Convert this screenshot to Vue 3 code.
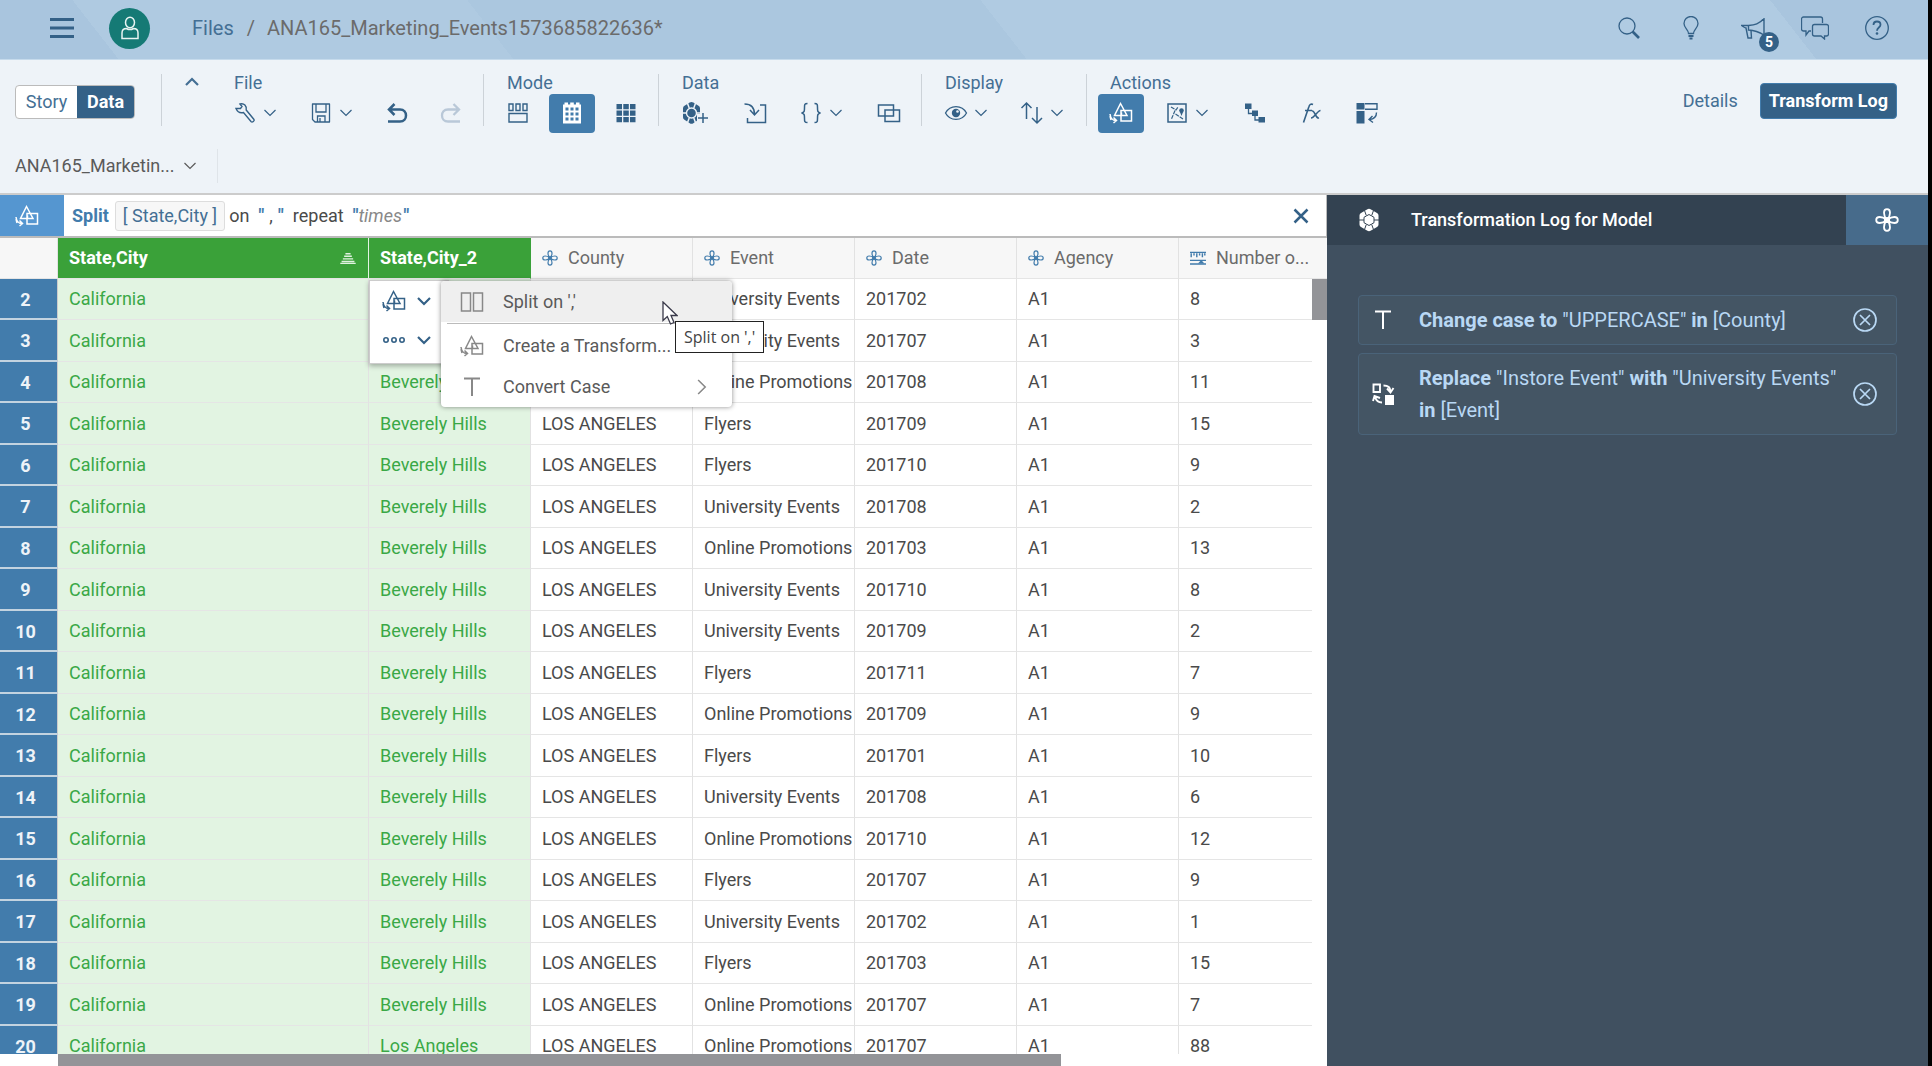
<script setup>
import { ref } from 'vue'

const view = ref('data')

const toolGroups = [
  {
    label: 'File',
    wide: false,
    tools: [
      { icon: 'wrench', name: 'Settings', menu: true },
      { icon: 'save', name: 'Save', menu: true },
      { icon: 'undo', name: 'Undo' },
      { icon: 'redo', name: 'Redo', disabled: true },
    ],
  },
  {
    label: 'Mode',
    wide: false,
    tools: [
      { icon: 'cards', name: 'Card view' },
      { icon: 'sheet', name: 'Grid view', active: true },
      { icon: 'tiles', name: 'Dimension view' },
    ],
  },
  {
    label: 'Data',
    wide: true,
    tools: [
      { icon: 'cluster-add', name: 'Add model', large: true },
      { icon: 'import', name: 'Import' },
      { icon: 'braces', name: 'Expression', menu: true },
      { icon: 'combine', name: 'Combine data' },
    ],
  },
  {
    label: 'Display',
    wide: false,
    tools: [
      { icon: 'eye', name: 'Show or hide', menu: true },
      { icon: 'sort', name: 'Sort', menu: true },
    ],
  },
  {
    label: 'Actions',
    wide: true,
    tools: [
      { icon: 'transform', name: 'Create transform', active: true },
      { icon: 'geo', name: 'Geo enrichment', menu: true },
      { icon: 'hierarchy', name: 'Hierarchy' },
      { icon: 'fx', name: 'Formula' },
      { icon: 'pivot', name: 'Pivot' },
    ],
  },
]

const columns = ['County', 'Event', 'Date', 'Agency']

const rows = [
  ['University Events', '201702', 8],
  ['University Events', '201707', 3],
  ['Online Promotions', '201708', 11],
  ['Flyers', '201709', 15],
  ['Flyers', '201710', 9],
  ['University Events', '201708', 2],
  ['Online Promotions', '201703', 13],
  ['University Events', '201710', 8],
  ['University Events', '201709', 2],
  ['Flyers', '201711', 7],
  ['Online Promotions', '201709', 9],
  ['Flyers', '201701', 10],
  ['University Events', '201708', 6],
  ['Online Promotions', '201710', 12],
  ['Flyers', '201707', 9],
  ['University Events', '201702', 1],
  ['Flyers', '201703', 15],
  ['Online Promotions', '201707', 7],
  ['Online Promotions', '201707', 88],
].map(([event, date, count], i, all) => ({
  id: i + 2,
  city: i === all.length - 1 ? 'Los Angeles' : 'Beverely Hills',
  event,
  date,
  count,
}))
</script>

<template>
  <div class="app">
    <svg class="sprite" aria-hidden="true">
      <defs>
        <symbol id="i-chevron" viewBox="0 0 14 14"><path d="M1.5 4 7 9.5 12.5 4" fill="none" stroke="currentColor" stroke-width="1.2" /></symbol>
        <symbol id="i-chevron-bold" viewBox="0 0 14 14"><path d="M1 4 7 10 13 4" fill="none" stroke="currentColor" stroke-width="2.2" /></symbol>
        <symbol id="i-menu" viewBox="0 0 24 24"><path d="M0 3.500H24M0 12H24M0 20.500H24" stroke="currentColor" stroke-width="3" /></symbol>
        <symbol id="i-user" viewBox="0 0 24 24"><g fill="none" stroke="currentColor" stroke-width="1.500"><ellipse cx="12" cy="6.500" rx="4.500" ry="5.300" /><path d="M4 22.500v-5.500c0-3 2-4.500 4.500-4.500 2 1.200 5 1.200 7 0 2.500 0 4.500 1.500 4.500 4.500v5.500z" /></g></symbol>
        <symbol id="i-search" viewBox="0 0 24 24"><circle cx="10" cy="10" r="8" fill="none" stroke="currentColor" stroke-width="1.300" /><path d="m15.500 15.500 6.500 6.500" stroke="currentColor" stroke-width="2.600" /></symbol>
        <symbol id="i-bulb" viewBox="0 0 24 24"><g fill="none" stroke="currentColor" stroke-width="1.300"><path d="M9.500 17.500c0-4-4.500-5.500-4.500-10a7 7 0 0 1 14 0c0 4.500-4.500 6-4.500 10z" /><path d="M9.500 20h5M10.500 22.500h3" stroke-width="2" /></g></symbol>
        <symbol id="i-megaphone" viewBox="0 0 24 24"><g fill="none" stroke="currentColor" stroke-width="1.400"><path d="M23 2v17M23 2.500C18 8 14 9 7.500 9.500v4.500c6.500.5 10.500 2 15.500 5M7.500 9.500H.5c1.500 1 3 2.500 4.500 2.500L7 22h3.500l-.5-7.500" /></g></symbol>
        <symbol id="i-chat" viewBox="0 0 28 24"><g fill="none" stroke="currentColor" stroke-width="1.300"><path d="M10 15H8l-3 4v-4H2.500a2 2 0 0 1-2-2V3a2 2 0 0 1 2-2h17a2 2 0 0 1 2 2v4" /><path d="M13.500 8.500h12a2 2 0 0 1 2 2v7.500a2 2 0 0 1-2 2h-2V23l-3.500-3h-6.500a2 2 0 0 1-2-2v-7.500a2 2 0 0 1 2-2z" /></g></symbol>
        <symbol id="i-help" viewBox="0 0 24 24"><circle cx="12" cy="12" r="11.300" fill="none" stroke="currentColor" stroke-width="1.300" /><path d="M8.500 9c0-2 1.500-3.500 3.500-3.500s3.500 1.300 3.500 3.200c0 2.800-3.500 2.800-3.500 6" fill="none" stroke="currentColor" stroke-width="1.800" /><circle cx="12" cy="17.500" r="1.300" fill="currentColor" /></symbol>

        <symbol id="i-wrench" viewBox="0 0 24 24"><path d="M3 7.500h4.500l1.500-2L7 3c4-1.200 7 2 6.200 6l7.800 9.500c.8 1.200-1.600 3.300-2.800 2.300L10.500 11.500c-3 .8-6-.5-7.500-4z" fill="none" stroke="currentColor" stroke-width="1.400" /></symbol>
        <symbol id="i-save" viewBox="0 0 24 24"><g fill="none" stroke="currentColor" stroke-width="1.300"><path d="M3.500 3h17v18H6l-2.500-2.500z" stroke-linejoin="round" /><path d="M7 3v8h10V3M8.500 21v-6H16v6M11 17v4" /></g></symbol>
        <symbol id="i-undo" viewBox="0 0 24 24"><path d="M9.500 3 4 8.500l5.500 5.500M4 8.500h11c4 0 6 3 6 6s-2 6-6 6H3" fill="none" stroke="currentColor" stroke-width="2.500" /></symbol>
        <symbol id="i-redo" viewBox="0 0 24 24"><path d="M14.500 3 20 8.500 14.500 14M20 8.500H9c-4 0-6 3-6 6s2 6 6 6h12" fill="none" stroke="currentColor" stroke-width="2.300" /></symbol>
        <symbol id="i-cards" viewBox="0 0 24 24"><path d="M3 3h4v6.500H3zM10 3h4v6.500h-4zM17 3h4v6.500h-4zM3 12.500h18V21H3z" fill="none" stroke="currentColor" stroke-width="1.400" /></symbol>
        <symbol id="i-sheet" viewBox="0 0 24 24"><path d="M4.500 1.500H8v2h2.200v-2h3.600v2H16v-2h3.500v2H21V22.500H3V3.500h1.500z" fill="currentColor" /><path d="M5.500 8h3M10.500 8h3M15.500 8h3M5.500 13h3M10.500 13h3M15.500 13h3M5.500 18h3M10.500 18h3M15.500 18h3" stroke="#427cac" stroke-width="3" /></symbol>
        <symbol id="i-tiles" viewBox="0 0 24 24"><path d="M2.500 3h5.500v5.300H2.500zM9.300 3h5.500v5.300H9.300zM16 3h5.500v5.300H16zM2.500 9.500h5.500v5.300H2.500zM9.300 9.500h5.500v5.300H9.300zM16 9.500h5.500v5.300H16zM2.500 16h5.500v5.300H2.500zM9.300 16h5.500v5.300H9.300zM16 16h5.500v5.300H16z" fill="currentColor" /></symbol>
        <symbol id="i-cluster" viewBox="0 0 22 24"><path d="M9 1.500q2-1.500 4 0L19 5q1.500.8 1.500 2.500v9q0 1.700-1.500 2.500l-6 3.500q-2 1.500-4 0L3 19q-1.500-.8-1.500-2.500v-9Q1.500 5.800 3 5z" fill="currentColor" /><path d="m11 6.500 5 2.800v5.400l-5 2.800-5-2.800V9.300zM6.500 2.500l1.800 5M15.500 2.500l-1.800 5M1 12h5M16 12h5M6.500 21.500l1.800-5M15.500 21.500l-1.800-5" fill="none" stroke="#334251" stroke-width="1" /><circle cx="11" cy="12" r="4" fill="currentColor" /></symbol>
        <symbol id="i-cluster-add" viewBox="0 0 28 24"><path d="M8.700 1.500q1.800-1.200 3.600 0L17.500 4.800q1.500.8 1.500 2.500v9q0 1.700-1.500 2.500l-5.200 3.400q-1.800 1.200-3.600 0l-5.200-3.400Q2 18 2 16.300v-9q0-1.700 1.500-2.500z" fill="currentColor" /><path d="M6.200 1.500l2 5.500M14.800 1.500l-2 5.500M1 12h5.500M14.500 12H20M6.200 22.500l2-5.500M14.800 22.500l-2-5.500" stroke="#eef3f8" stroke-width="1.500" /><circle cx="10.500" cy="12" r="5" fill="currentColor" stroke="#eef3f8" stroke-width="1.400" /><path d="M16 13h12v10H16z" fill="#eef3f8" /><path d="M17 17h10M22 12v10" stroke="currentColor" stroke-width="1.500" /></symbol>
        <symbol id="i-import" viewBox="0 0 24 24"><path d="M1.500 3c6 0 10 3 10 10.500M7 9l4.500 5L16 9M17 4h5.500v17.500h-18V17" fill="none" stroke="currentColor" stroke-width="1.500" /></symbol>
        <symbol id="i-braces" viewBox="0 0 24 24"><path d="M8.500 2.500c-3 0-3 1-3 4 0 3.500 0 5-3 5.500 3 .5 3 2 3 5.500 0 3 0 4 3 4M15.500 2.500c3 0 3 1 3 4 0 3.500 0 5 3 5.500-3 .5-3 2-3 5.500 0 3 0 4-3 4" fill="none" stroke="currentColor" stroke-width="1.500" /></symbol>
        <symbol id="i-combine" viewBox="0 0 24 24"><path d="M1.500 4h15v11h-15zM8 9h14.500v11.500H8z" fill="none" stroke="currentColor" stroke-width="1.500" /></symbol>
        <symbol id="i-eye" viewBox="0 0 24 24"><path d="M1.500 12C6 3.500 18 3.500 22.500 12 18 20.500 6 20.500 1.500 12z" fill="none" stroke="currentColor" stroke-width="1.300" /><circle cx="12" cy="12" r="4.200" fill="currentColor" /><circle cx="13.500" cy="10.500" r="1.300" fill="#eef3f8" /></symbol>
        <symbol id="i-sort" viewBox="0 0 24 24"><path d="M6.500 18V2M1.500 7l5-5 5 5M17 6v16M12 17l5 5 5-5" fill="none" stroke="currentColor" stroke-width="1.500" /></symbol>
        <symbol id="i-transform" viewBox="0 0 24 24"><g fill="none" stroke="currentColor" stroke-width="1.500"><path d="m11.500 2.500 6.500 12H5.500zM12 9.500H22.500v10.500H12zM12.500 14.500v-3" /><path d="M1 13c.5 4 3 6.500 6 6.500M4.500 16.500l3 3-3 2.500M2 19l-1-4" /></g></symbol>
        <symbol id="i-geo" viewBox="0 0 24 24"><path d="M3 3h18v18H3z" fill="none" stroke="currentColor" stroke-width="1.500" /><path d="m6 6 5 3 2-3M10 9.500 6.500 18M10.500 13l7.500 5" fill="none" stroke="currentColor" stroke-width="1.200" stroke-dasharray="4 1" /><circle cx="16.500" cy="9.500" r="2.300" fill="currentColor" /><path d="m15 11 1.500 4 1.500-4z" fill="currentColor" /></symbol>
        <symbol id="i-hierarchy" viewBox="0 0 24 24"><path d="M2 2.500h6.500v5.500H2zM9 9.500h6v5.500H9zM15.500 16h6.500v5.500h-6.500z" fill="currentColor" /><path d="M5.500 8v4.500H9M12 15v4h4" fill="none" stroke="currentColor" stroke-width="1.300" /></symbol>
        <symbol id="i-fx" viewBox="0 0 24 24"><path d="M14 3.500c-2-1-3.500 0-4.200 2.500L4.500 21.500M6 9.500h7M13 10c3-1 3.500 8 7 7M21.500 9.500c-3 0-6 7.500-9.500 7.500" fill="none" stroke="currentColor" stroke-width="1.600" /></symbol>
        <symbol id="i-pivot" viewBox="0 0 24 24"><path d="M1.500 2h8v6.500h-8zM1.500 10h8v12.500h-8z" fill="currentColor" /><path d="M10 2.700h12v5.500H10M21.500 11.500c0 4-2.500 6.500-7 7M17.500 15l-3.500 3.500 4 3" fill="none" stroke="currentColor" stroke-width="1.400" /></symbol>

        <symbol id="i-dimension" viewBox="0 0 20 20"><g fill="none" stroke="currentColor" stroke-width="1.500"><path d="M9.500 9.500C7 6 6.500 1 10 1s3 5 .5 8.500C14 7 19 6.500 19 10s-5 3-8.500.5C13 14 13.500 19 10 19s-3-5-.5-8.500C6 13 1 13.500 1 10s5-3 8.500-.5z" /></g><circle cx="10" cy="10" r="2.600" fill="currentColor" /></symbol>
        <symbol id="i-measure" viewBox="0 0 20 20"><path d="M0 3h20M1.500 4v5M5 4v3M8.500 4v5M12 4v3M15.500 4v5M18.500 4v3M0 13h20M0 17.500h20" stroke="currentColor" stroke-width="1.800" /><path d="m10 17 4-4.500 4 4.500z" fill="currentColor" /></symbol>
        <symbol id="i-ascending" viewBox="0 0 18 14"><path d="M6 2h6M4.500 5h9M3 8h12M1.500 11h15M0 13.500h18" stroke="currentColor" stroke-width="1.700" /></symbol>
        <symbol id="i-close" viewBox="0 0 16 16"><path d="m1.500 1.500 13 13M14.500 1.500l-13 13" stroke="currentColor" stroke-width="2.500" /></symbol>
        <symbol id="i-remove" viewBox="0 0 24 24"><g fill="none" stroke="currentColor" stroke-width="1.700"><circle cx="12" cy="12" r="11" /><path d="m7 7 10 10M17 7 7 17" /></g></symbol>
        <symbol id="i-more" viewBox="0 0 24 24"><g fill="none" stroke="currentColor" stroke-width="1.600"><circle cx="4" cy="12" r="2.200" /><circle cx="12" cy="12" r="2.200" /><circle cx="20" cy="12" r="2.200" /></g></symbol>
        <symbol id="i-split" viewBox="0 0 24 24"><path d="M1.500 3h9v18h-9zM13.500 3h9v18h-9z" fill="none" stroke="currentColor" stroke-width="1.500" /></symbol>
        <symbol id="i-text" viewBox="0 0 24 24"><path d="M4 3.500h16M12 3.500V21" fill="none" stroke="currentColor" stroke-width="2" /></symbol>
        <symbol id="i-replace" viewBox="0 0 24 24"><path d="M2.500 2.500H9V10H2.500zM12.500 3.500c4 0 7 2 7 6M16 6.500l3.500 4 3-4.500M11 20.500c-4 0-6-2-7-6M2 19l1.500-5L9 16" fill="none" stroke="currentColor" stroke-width="1.900" /><path d="M14 13h9v10h-9z" fill="currentColor" /></symbol>
      </defs>
    </svg>

    <header class="shell">
      <button class="icon-btn menu-btn" aria-label="Menu"><svg><use href="#i-menu" /></svg></button>
      <button class="icon-btn avatar" aria-label="Profile"><svg><use href="#i-user" /></svg></button>
      <nav class="crumbs">
        <a href="#files">Files</a><span class="slash">/</span><span class="doc">ANA165_Marketing_Events1573685822636*</span>
      </nav>
      <div class="shell-actions">
        <button class="icon-btn" aria-label="Search"><svg><use href="#i-search" /></svg></button>
        <button class="icon-btn" aria-label="Tips"><svg><use href="#i-bulb" /></svg></button>
        <button class="icon-btn" aria-label="Notifications"><svg><use href="#i-megaphone" /></svg><span class="badge">5</span></button>
        <button class="icon-btn chat" aria-label="Discussions"><svg><use href="#i-chat" /></svg></button>
        <button class="icon-btn" aria-label="Help"><svg><use href="#i-help" /></svg></button>
      </div>
    </header>

    <section class="toolbar">
      <div class="tools">
        <div class="switch">
          <button :class="{ on: view === 'story' }" @click="view = 'story'">Story</button>
          <button :class="{ on: view === 'data' }" @click="view = 'data'">Data</button>
        </div>
        <span class="sep"></span>
        <button class="icon-btn collapse" aria-label="Collapse toolbar"><svg><use href="#i-chevron-bold" /></svg></button>
        <template v-for="(group, g) in toolGroups" :key="group.label">
          <span v-if="g" class="sep"></span>
          <div class="group" :class="{ wide: group.wide }">
            <div class="group-label">{{ group.label }}</div>
            <div class="group-row">
              <button
                v-for="tool in group.tools"
                :key="tool.icon"
                class="tool"
                :class="{ active: tool.active, menu: tool.menu, large: tool.large }"
                :disabled="tool.disabled"
                :aria-label="tool.name"
              >
                <svg class="glyph"><use :href="'#i-' + tool.icon" /></svg>
                <svg v-if="tool.menu" class="arrow"><use href="#i-chevron" /></svg>
              </button>
            </div>
          </div>
        </template>
        <div class="panel-buttons">
          <button class="details">Details</button>
          <button class="log-btn">Transform Log</button>
        </div>
      </div>
      <div class="tabs">
        <button class="tab">ANA165_Marketin...<svg><use href="#i-chevron" /></svg></button>
      </div>
    </section>

    <main class="work">
      <section class="editor">
        <div class="formula">
          <span class="formula-icon"><svg><use href="#i-transform" /></svg></span>
          <div class="expression">
            <b>Split</b>
            <span class="chip">[ State,City ]</span>
            <span>on</span>
            <label class="quoted"><i>"</i><input class="delimiter" value="," aria-label="Delimiter" /><i>"</i></label>
            <span>repeat</span>
            <label class="quoted"><i>"</i><input class="times" placeholder="times" aria-label="Times" /><i>"</i></label>
          </div>
          <button class="icon-btn close" aria-label="Close"><svg><use href="#i-close" /></svg></button>
        </div>

        <div class="grid">
          <table>
            <colgroup>
              <col class="c-num" /><col class="c-state" /><col class="c-city" />
              <col v-for="c in columns" :key="c" class="c-dim" /><col /><col class="c-scroll" />
            </colgroup>
            <thead>
              <tr>
                <th class="corner"></th>
                <th class="picked"><div class="head">State,City<svg class="order"><use href="#i-ascending" /></svg></div></th>
                <th class="picked last">State,City_2</th>
                <th v-for="c in columns" :key="c"><div class="head"><svg><use href="#i-dimension" /></svg>{{ c }}</div></th>
                <th colspan="2" class="end"><div class="head"><svg><use href="#i-measure" /></svg>Number o...</div></th>
              </tr>
            </thead>
            <tbody>
              <tr v-for="row in rows" :key="row.id">
                <th scope="row">{{ row.id }}</th>
                <td class="picked">California</td>
                <td class="picked">{{ row.city }}</td>
                <td>LOS ANGELES</td>
                <td>{{ row.event }}</td>
                <td>{{ row.date }}</td>
                <td>A1</td>
                <td class="count">{{ row.count }}</td>
                <td class="gutter"></td>
              </tr>
            </tbody>
          </table>
          <span class="v-thumb"></span>

          <div class="quick">
            <button aria-label="Transform options"><svg class="glyph"><use href="#i-transform" /></svg><svg class="arrow"><use href="#i-chevron-bold" /></svg></button>
            <button aria-label="More options"><svg class="glyph"><use href="#i-more" /></svg><svg class="arrow"><use href="#i-chevron-bold" /></svg></button>
          </div>
          <div class="context">
            <button class="hover"><svg><use href="#i-split" /></svg>Split on ','</button>
            <hr />
            <button><svg><use href="#i-transform" /></svg>Create a Transform...</button>
            <button><svg><use href="#i-text" /></svg>Convert Case<svg class="sub"><use href="#i-chevron" /></svg></button>
          </div>
          <div class="tip" role="tooltip">Split on ','</div>
          <svg class="cursor" viewBox="0 0 16 24"><path d="M1 1v18.500l4.300-4L8.500 23l3.500-1.500L9 14.500h6z" fill="#fff" stroke="#3a3a4a" stroke-width="1.300" /></svg>
        </div>
        <div class="h-scroll"><span></span></div>
      </section>

      <aside class="log">
        <div class="log-head">
          <svg class="log-icon"><use href="#i-cluster" /></svg>
          <h2>Transformation Log for Model</h2>
          <button class="icon-btn log-tab" aria-label="Dimensions"><svg><use href="#i-dimension" /></svg></button>
        </div>
        <ul>
          <li>
            <svg><use href="#i-text" /></svg>
            <p><b>Change case to</b> "UPPERCASE" <b>in</b> [County]</p>
            <button class="icon-btn" aria-label="Remove case change"><svg><use href="#i-remove" /></svg></button>
          </li>
          <li>
            <svg><use href="#i-replace" /></svg>
            <p><b>Replace</b> "Instore Event" <b>with</b> "University Events" <b>in</b> [Event]</p>
            <button class="icon-btn" aria-label="Remove replacement"><svg><use href="#i-remove" /></svg></button>
          </li>
        </ul>
      </aside>
    </main>
  </div>
</template>

<style>
html,
body {
  background: #fff;
}
</style>

<style scoped>
* {
  box-sizing: border-box;
}

.app {
  display: flex;
  flex-direction: column;
  height: 100vh;
  overflow: hidden;
  border-right: 4px solid #000;
  background: #fff;
  color: #4a4a4a;
  font: 18px/22px Roboto, 'Liberation Sans', sans-serif;
}

.sprite {
  position: absolute;
  width: 0;
  height: 0;
}

button,
input {
  margin: 0;
  padding: 0;
  border: 0;
  background: none;
  color: inherit;
  font: inherit;
}

svg {
  display: block;
  flex: none;
  width: 24px;
  height: 24px;
}

.icon-btn {
  display: flex;
  align-items: center;
  justify-content: center;
}

/* Shell bar */
.shell {
  display: flex;
  align-items: center;
  flex: none;
  height: 60px;
  padding: 0 39px 3px 50px;
  border-bottom: 1px solid #c6dbec;
  background: linear-gradient(52deg, #a9c5de 0 6%, #afcae1 6% 26%, #abc7df 26% 52%, #b0cbe2 52% 92%, #a9c5de 92%);
  color: #346187;
}

.menu-btn svg {
  height: 24px;
}

.avatar {
  width: 41px;
  height: 41px;
  margin-left: 35px;
  border-radius: 50%;
  background: #157a75;
  color: #e8f4f2;
}

.crumbs {
  display: flex;
  margin-left: 42px;
  color: #6b6b6b;
  font-size: 20px;
}

.crumbs a {
  color: #446f94;
  text-decoration: none;
}

.slash {
  padding: 0 12px 0 13px;
}

.shell-actions {
  display: flex;
  gap: 38px;
  margin-left: auto;
}

.shell-actions .icon-btn {
  position: relative;
}

.shell-actions .chat svg {
  width: 28px;
}

.shell-actions .chat {
  margin: 0 -2px;
}

.badge {
  position: absolute;
  top: 16px;
  left: 18px;
  width: 20px;
  height: 20px;
  border-radius: 50%;
  background: #346187;
  color: #fff;
  font-size: 14px;
  font-weight: 700;
  line-height: 20px;
  text-align: center;
}

/* Toolbar */
.toolbar {
  flex: none;
  height: 135px;
  border-bottom: 2px solid #ccc;
  background: #eef3f8;
  color: #446f94;
}

.tools {
  display: flex;
  align-items: flex-start;
  padding: 12px 31px 0 15px;
}

.switch {
  display: flex;
  flex: none;
  height: 34px;
  margin: 13px 26px 0 0;
  overflow: hidden;
  border: 1px solid #bbb;
  border-radius: 4px;
  background: #fff;
}

.switch button {
  width: 61px;
}

.switch button + button {
  width: 57px;
}

.switch .on {
  background: #346187;
  color: #fff;
  font-weight: 700;
}

.sep {
  flex: none;
  width: 1px;
  height: 52px;
  margin-top: 2px;
  background: #ccd2d8;
}

.collapse {
  width: 60px;
  height: 20px;
}

.collapse svg {
  width: 14px;
  height: 14px;
  transform: rotate(180deg);
}

.group {
  padding: 0 9px 0 11px;
}

.collapse + .group {
  padding-left: 0;
}

.group-label {
  padding-left: 12px;
}

.group-row {
  display: flex;
  gap: 8px;
}

.wide .group-row {
  gap: 10px;
}

.tool {
  display: flex;
  align-items: center;
  gap: 6px;
  width: 46px;
  height: 39px;
  padding-left: 11px;
  padding-bottom: 1px;
  border-radius: 4px;
  color: #346187;
}

.tool.menu {
  width: 68px;
}

.tool.large {
  width: 52px;
}

.tool.large .glyph {
  width: 28px;
}

.tool.active {
  background: #427cac;
  color: #fff;
}

.tool:disabled {
  color: #b9c8d8;
}

.tool .arrow {
  width: 14px;
  height: 14px;
}

.panel-buttons {
  display: flex;
  align-items: center;
  gap: 22px;
  margin: 11px 0 0 auto;
  white-space: nowrap;
}

.log-btn {
  height: 36px;
  padding: 0 8px;
  border: 1px solid #427cac;
  border-radius: 4px;
  background: #346187;
  color: #fff;
  font-weight: 700;
}

.tabs {
  display: flex;
  margin-top: 16px;
}

.tab {
  display: flex;
  align-items: center;
  gap: 8px;
  height: 34px;
  padding: 0 20px 0 15px;
  border-right: 1px solid #dfe4e9;
  color: #5a5a5a;
}

.tab svg {
  width: 14px;
  height: 14px;
}

/* Workspace */
.work {
  display: flex;
  flex: 1;
  min-height: 0;
}

.editor {
  display: flex;
  flex-direction: column;
  flex: 1;
  min-width: 0;
}

.formula {
  display: flex;
  align-items: center;
  flex: none;
  height: 43px;
  border-right: 1px solid #bbb;
  border-bottom: 2px solid #bbb;
}

.formula-icon {
  display: flex;
  align-items: center;
  justify-content: center;
  align-self: stretch;
  width: 64px;
  padding-right: 10px;
  background: #5596d0;
  color: #fff;
}

.expression {
  display: flex;
  align-items: center;
  padding-left: 8px;
}

.expression b {
  color: #427cac;
}

.chip {
  margin: 0 4px 0 6px;
  padding: 3px 7px;
  border: 1px solid #ddd;
  border-radius: 3px;
  background: #f7f7f7;
  color: #446f94;
}

.quoted {
  display: flex;
  margin: 0 9px;
}

.quoted i {
  color: #427cac;
  font-style: normal;
  font-weight: 700;
}

.quoted input {
  height: 22px;
}

.delimiter {
  width: 14px;
  text-align: center;
}

.times {
  width: 45px;
  font-style: italic;
}

.times::placeholder {
  color: #888;
  opacity: 1;
}

.close {
  margin: 0 17px 0 auto;
  color: #346187;
}

.close svg {
  width: 16px;
  height: 16px;
}

.grid {
  position: relative;
  flex: 1;
  min-height: 0;
  overflow: hidden;
}

table {
  width: 100%;
  table-layout: fixed;
  border-collapse: separate;
  border-spacing: 0;
}

.c-num {
  width: 58px;
}

.c-state {
  width: 311px;
}

.c-city {
  width: 162px;
}

.c-dim {
  width: 162px;
}

.c-scroll {
  width: 15px;
}

th,
td {
  height: 41px;
  padding: 0 0 0 11px;
  overflow: hidden;
  border-right: 1px solid #e2e2e2;
  border-bottom: 1px solid #e5e5e5;
  font-weight: 400;
  text-align: left;
  white-space: nowrap;
}

tbody tr:nth-child(even) > * {
  height: 42px;
}

thead th {
  padding: 0 12px 0 11px;
  background: #f7f7f7;
  color: #6b6b6b;
}

thead .picked {
  border-right-color: #e2f4e2;
  background: #3aa139;
  color: #fff;
  font-weight: 700;
}

thead .last {
  border-right-color: #3aa139;
}

thead .end {
  border-right: 0;
}

.head {
  display: flex;
  align-items: center;
  gap: 10px;
}

.head svg {
  width: 16px;
  height: 16px;
  color: #427cac;
}

.head .order {
  width: 16px;
  height: 12px;
  margin-left: auto;
  color: #dff2df;
}

tbody th {
  padding: 2px 6px 0 0;
  border-right-color: #ccc;
  border-bottom: 2px solid #c3d3e0;
  background: #427cac;
  color: #eef3f8;
  font-weight: 700;
  text-align: center;
}

td.picked {
  background: #e2f4e2;
  color: #3aa846;
}

td.count,
td.gutter {
  border-right: 0;
}

td.gutter {
  border-bottom: 0;
}

.v-thumb {
  position: absolute;
  top: 41px;
  right: 0;
  width: 15px;
  height: 41px;
  background: #939498;
}

.h-scroll {
  flex: none;
  height: 12px;
  padding-left: 58px;
}

.h-scroll span {
  display: block;
  width: 79%;
  height: 12px;
  background: #939498;
}

/* Floating column menus */
.quick {
  position: absolute;
  top: 42px;
  left: 369px;
  width: 80px;
  padding-bottom: 4px;
  border: 1px solid #ccc;
  background: #fff;
  box-shadow: 0 2px 5px rgba(0, 0, 0, 0.3);
  color: #346187;
}

.quick button {
  display: flex;
  align-items: center;
  gap: 11px;
  height: 39px;
  padding-left: 12px;
}

.quick .arrow {
  width: 14px;
  height: 14px;
}

.context {
  position: absolute;
  top: 43px;
  left: 441px;
  width: 291px;
  overflow: hidden;
  border-radius: 4px;
  background: #fff;
  box-shadow: 0 0 5px rgba(0, 0, 0, 0.45);
  color: #5a5a5a;
}

.context button {
  display: flex;
  align-items: center;
  gap: 19px;
  width: 100%;
  height: 41px;
  padding-left: 19px;
}

.context .hover {
  background: #efefef;
}

.context hr {
  height: 1px;
  margin: 1px 0 1px 6px;
  border: 0;
  background: #bbb;
}

.context svg {
  color: #888;
}

.context .sub {
  width: 18px;
  height: 18px;
  margin: 0 21px 0 auto;
  transform: rotate(-90deg);
}

.tip {
  position: absolute;
  top: 83px;
  left: 675px;
  padding: 4px 8px;
  border: 1px solid #222;
  background: #fff;
  color: #444;
  font-family: 'Open Sans', 'Noto Sans', sans-serif;
  font-size: 16px;
}

.cursor {
  position: absolute;
  top: 63px;
  left: 662px;
  width: 16px;
  height: 24px;
}

/* Transformation log */
.log {
  flex: none;
  width: 601px;
  background: #405060;
}

.log-head {
  display: flex;
  align-items: center;
  height: 50px;
  padding-left: 31px;
  background: #334251;
  color: #fff;
}

.log-icon {
  width: 22px;
}

h2 {
  margin: 0 auto 0 31px;
  font-size: 18px;
  font-weight: 500;
}

.log-tab {
  width: 82px;
  height: 50px;
  background: #476b8b;
}

ul {
  display: flex;
  flex-direction: column;
  gap: 8px;
  margin: 0;
  padding: 50px 31px 0;
  list-style: none;
}

li {
  display: flex;
  align-items: center;
  padding: 8px 19px 8px 12px;
  border: 1px solid #4a6379;
  border-radius: 4px;
  background: #445564;
  color: #fff;
}

li p {
  flex: 1;
  margin: 0 10px 0 24px;
  color: #b9d8f4;
  font-size: 20px;
  line-height: 32px;
}

li .icon-btn {
  color: #b9d8f4;
}
</style>
